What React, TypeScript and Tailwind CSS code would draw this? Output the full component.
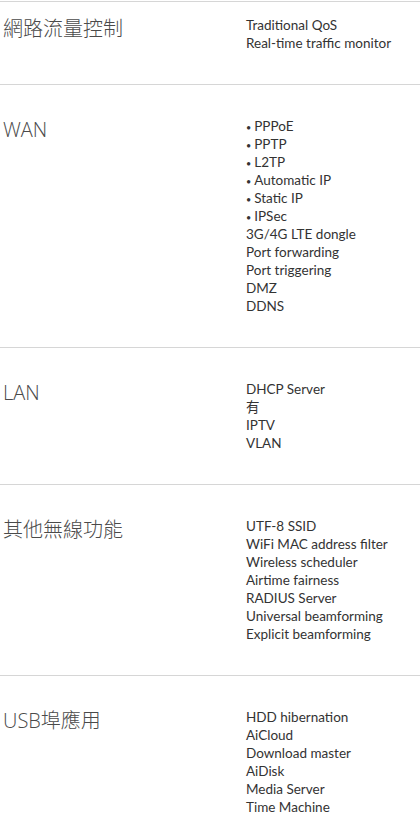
const SECTIONS: { title: string; items: string[] }[] = [
  { title: "網路流量控制", items: ["Traditional QoS", "Real-time traffic monitor"] },
  {
    title: "WAN",
    items: [
      "• PPPoE",
      "• PPTP",
      "• L2TP",
      "• Automatic IP",
      "• Static IP",
      "• IPSec",
      "3G/4G LTE dongle",
      "Port forwarding",
      "Port triggering",
      "DMZ",
      "DDNS",
    ],
  },
  { title: "LAN", items: ["DHCP Server", "有", "IPTV", "VLAN"] },
  {
    title: "其他無線功能",
    items: [
      "UTF-8 SSID",
      "WiFi MAC address filter",
      "Wireless scheduler",
      "Airtime fairness",
      "RADIUS Server",
      "Universal beamforming",
      "Explicit beamforming",
    ],
  },
  {
    title: "USB埠應用",
    items: ["HDD hibernation", "AiCloud", "Download master", "AiDisk", "Media Server", "Time Machine"],
  },
];

export default function App() {
  return (
    <div className="min-h-[820px] w-[420px] overflow-hidden bg-white">
      {SECTIONS.map((s, i) => (
        <Section key={s.title} title={s.title} items={s.items} first={i === 0} />
      ))}
    </div>
  );
}

function Section({ title, items, first }: { title: string; items: string[]; first: boolean }) {
  return (
    <div
      className={`grid grid-cols-[246px_1fr] border-t border-[#d6d6d6] pb-8 ${
        first ? "mt-px pt-[14px]" : "pt-8"
      }`}
    >
      <h3 className="pl-[3px] font-['Open_Sans','Noto_Sans_CJK_TC',sans-serif] text-[20px] font-light leading-[26px] text-[#4a4a4a]">
        {title}
      </h3>
      <ul className="font-['Lato','Noto_Sans_CJK_TC',sans-serif] text-[13.5px] leading-[18px] text-[#333]">
        {items.map((it) => (
          <li key={it} className="h-[18px] whitespace-nowrap">
            {it.startsWith("• ") ? (
              <>
                <span className="mr-[3px] text-[9px]">•</span>
                {it.slice(2)}
              </>
            ) : (
              it
            )}
          </li>
        ))}
      </ul>
    </div>
  );
}
